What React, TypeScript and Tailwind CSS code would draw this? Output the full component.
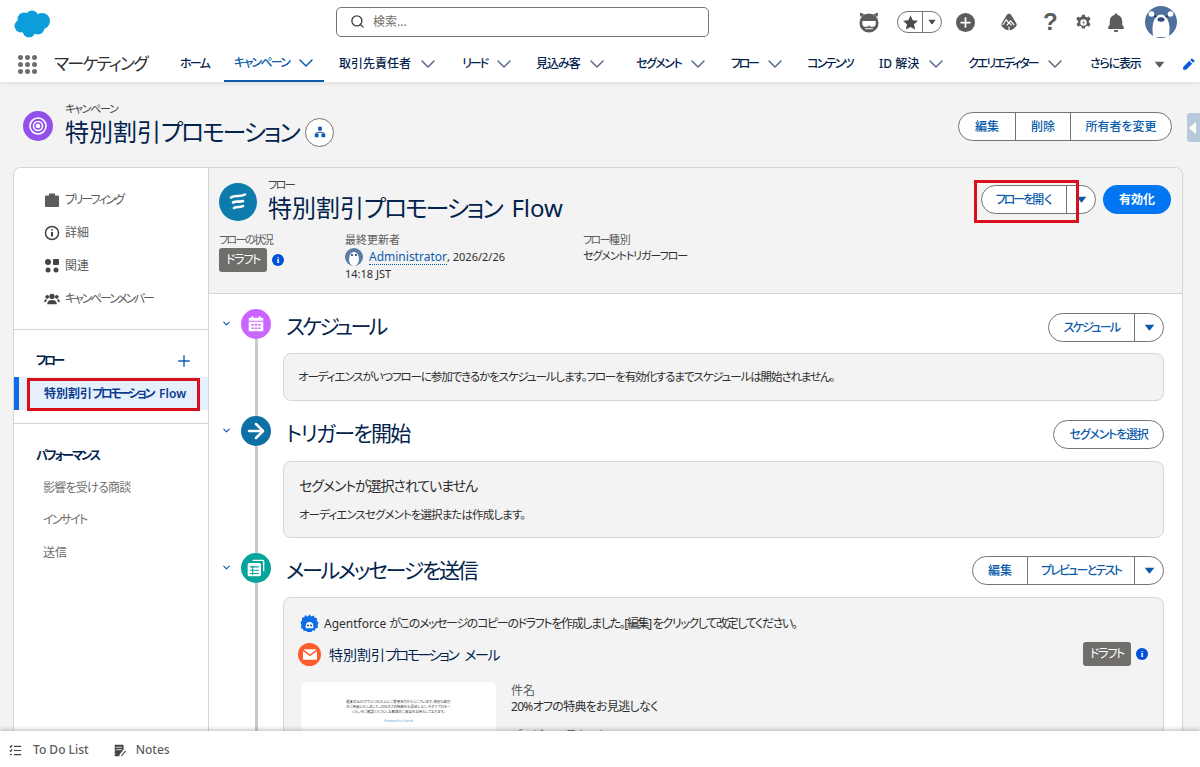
import React from 'react'
import { Search, ChevronDown, Plus, ArrowRight } from 'lucide-react'

const Caret = ({ className = '' }: { className?: string }) => (
  <svg viewBox="0 0 12 8" className={className} fill="currentColor">
    <path d="M0.5 0.8h11L6.6 7.2a.8.8 0 0 1-1.2 0z" />
  </svg>
)

const tabs = [
  { label: 'ホーム', w: 'w-[54px]', track: 'tracking-[-1.7px]' },
  { label: 'キャンペーン', w: 'w-[100px]', track: 'tracking-[-1.8px]', chevron: true, active: true },
  { label: '取引先責任者', w: 'w-[123px]', track: '', chevron: true },
  { label: 'リード', w: 'w-[74px]', track: 'tracking-[-2px]', chevron: true },
  { label: '見込み客', w: 'w-[100px]', track: 'tracking-[-1px]', chevron: true },
  { label: 'セグメント', w: 'w-[95px]', track: 'tracking-[-1.5px]', chevron: true },
  { label: 'フロー', w: 'w-[76px]', track: 'tracking-[-2.3px]', chevron: true },
  { label: 'コンテンツ', w: 'w-[72px]', track: 'tracking-[-1.8px]' },
  { label: 'ID 解決', w: 'w-[89px]', track: '', chevron: true },
  { label: 'クエリエディター', w: 'w-[122px]', track: 'tracking-[-2px]', chevron: true },
]

const Cloud = () => (
  <svg viewBox="0 0 38 28" className="w-[38px] h-[28px]" fill="#0d9dda">
    <circle cx="11" cy="9" r="6.500" />
    <circle cx="19" cy="7" r="6.500" />
    <circle cx="29" cy="11" r="8" />
    <circle cx="8" cy="16" r="6.500" />
    <circle cx="16" cy="21" r="6.500" />
    <circle cx="25" cy="18" r="6.500" />
    <rect x="10" y="8" width="18" height="12" />
  </svg>
)

const Launcher = () => (
  <div className="grid grid-cols-3 gap-x-[2px] gap-y-[2px] w-[19px]">
    {Array.from({ length: 9 }).map((_, i) => (
      <span key={i} className="w-[5px] h-[5px] rounded-full bg-[#706e6b]" />
    ))}
  </div>
)

const Header = () => (
  <header className="h-[82px] bg-white shadow-[0_2px_4px_rgba(0,0,0,0.07)] relative z-10 shrink-0">
    <div className="h-[46px] flex items-center relative">
      <div className="w-[336px] pl-[13px] mt-[1px]"><Cloud /></div>
      <div className="w-[373px] h-[30px] -mt-[3px] border border-[#747474] rounded-[5px] flex items-center pl-[13px] gap-[8px]">
        <Search className="w-[15px] h-[15px] text-[#444]" strokeWidth={2.2} />
        <span className="text-[12px] text-[#706e6b]">検索...</span>
      </div>
      <div className="ml-auto -mt-[2px] flex items-center pr-[23px] text-[#5c5c5c]">
        <svg viewBox="1 1 22 23" className="w-[22px] h-[22px] mr-[17px]" fill="currentColor">
          <circle cx="12" cy="13.500" r="10" />
          <path d="M3 7L2.500 2.500 8 5zM21 7l.5-4.500L16 5z" />
          <path d="M5 11.500h14v2.500a3.500 3.500 0 0 1-3.500 3.500h-1.500a2 2 0 0 1-2-2 2 2 0 0 1-2 2H8.500A3.500 3.500 0 0 1 5 14z" fill="#fff" />
          <path d="M8 19h8v1H8z" fill="#fff" />
        </svg>
        <div className="w-[45px] h-[22px] rounded-full border border-[#747474] flex items-center mr-[14px]">
          <svg viewBox="0 0 24 24" className="w-[17px] h-[17px] ml-[4px] mr-[3px] shrink-0" fill="#4a4a4a">
            <path d="M12 1.800l3.100 6.900 7.400.8-5.500 5 1.500 7.400L12 18.200l-6.500 3.700L7 14.500l-5.500-5 7.400-.8z" />
          </svg>
          <div className="flex-1 h-full border-l border-[#747474] flex items-center justify-center">
            <Caret className="w-[8px] h-[6px] text-[#4a4a4a]" />
          </div>
        </div>
        <div className="w-[19px] h-[19px] rounded-full bg-[#5c5c5c] flex items-center justify-center mr-[25px]">
          <Plus className="w-[15px] h-[15px] text-white" strokeWidth={2.800} />
        </div>
        <svg viewBox="0 0 24 24" className="w-[18px] h-[18px] mr-[25px]" fill="currentColor">
          <path d="M12 1c1.500 0 2.500.8 3.200 1.900l6.300 10.300c1.200 2.200 1 4.300-1 5.300-2 2-4.500 4.500-8.500 4.500S5.500 20.500 3.500 18.500c-2-1-2.200-3.100-1-5.300L8.800 2.900C9.500 1.800 10.500 1 12 1z" />
          <path d="M3.500 16l5-7 3 4.500 2.500-3 5 5.500M9 16.500l3-3.500 3.500 3.500M12 18v5" stroke="#fff" strokeWidth="1.500" fill="none" />
        </svg>
        <span className="text-[24px] leading-none font-bold w-[13px] mr-[19px] text-center font-['Liberation_Sans',sans-serif]">?</span>
        <svg viewBox="0 0 24 24" className="w-[17px] h-[17px] mr-[16px]" fill="currentColor">
          <path fillRule="evenodd" d="M10 1h4l.7 3 2.300 1 2.700-1.600 2.300 3.900-2.300 2.200v2.500l2.300 2.200-2.300 3.900-2.700-1.600-2.300 1-.7 3h-4l-.7-3-2.300-1-2.700 1.600-2.300-3.900 2.300-2.200V9.500L1.700 7.300 4 3.400 6.700 5 9 4zM12 7.500a4.500 4.500 0 1 0 0 9 4.500 4.500 0 0 0 0-9z" />
          <path d="M13 8.500l-3 4h2l-1 3 3-4h-2z" />
        </svg>
        <svg viewBox="3 1 18 21" className="w-[16px] h-[19px] mr-[21px]" fill="currentColor">
          <path d="M12 1.500c1 0 1.600.7 1.700 1.500 3.500.8 5.300 3.500 5.300 7v3.500c0 1.500 2 2.500 2 4.200 0 .6-.4 1-1 1H4c-.6 0-1-.4-1-1 0-1.700 2-2.700 2-4.200V10c0-3.500 1.800-6.200 5.300-7 .1-.8.700-1.500 1.700-1.500zM9.500 20h5a2.500 2.500 0 0 1-5 0z" />
        </svg>
        <svg viewBox="0 0 32 32" className="w-[32px] h-[32px]">
          <circle cx="16" cy="16" r="16" fill="#4f6f9c" />
          <circle cx="6.500" cy="8" r="2.800" fill="#fff" />
          <circle cx="25.500" cy="8" r="2.800" fill="#fff" />
          <path d="M8.500 31C6 22 8 9 16 8.500 24 9 26 22 23.500 31z" fill="#fff" />
          <ellipse cx="16" cy="13.500" rx="3.500" ry="2.200" fill="#2f4a73" />
          <circle cx="10.500" cy="10.500" r="1.100" fill="#1e2f4f" />
          <circle cx="21.500" cy="10.500" r="1.100" fill="#1e2f4f" />
        </svg>
      </div>
    </div>
    <div className="h-[36px] flex items-center">
      <div className="pl-[18px] w-[54px]"><Launcher /></div>
      <span className="w-[126px] text-[17px] text-[#2e2e2e] [font-feature-settings:'palt'] tracking-[-1.800px] whitespace-nowrap">マーケティング</span>
      {tabs.map(t => (
        <div key={t.label} className={`${t.w} h-full shrink-0 flex items-center whitespace-nowrap text-[12px] ${t.active ? 'text-[#0b5cab] border-b-2 border-[#0b5cab] -ml-[10px] mr-[15px] pl-[10px]' : 'text-[#03234d]'}`}>
          <span className={`[font-feature-settings:'palt'] font-medium ${t.track}`}>{t.label}</span>
          {t.chevron && <ChevronDown className={`w-[24px] h-[24px] ml-[5px] ${t.active ? 'text-[#0b5cab]' : 'text-[#5a6b85]'}`} strokeWidth={1.500} />}
        </div>
      ))}
      <div className="w-[92px] flex items-center whitespace-nowrap text-[12px] text-[#03234d]">
        <span className="font-medium [font-feature-settings:'palt'] tracking-[-1.200px]">さらに表示</span>
        <Caret className="w-[11px] h-[7px] ml-[13px] text-[#5c5c5c]" />
      </div>
      <svg viewBox="0 0 24 24" className="w-[14px] h-[14px] text-[#0b5cdb]" fill="currentColor">
        <path d="M17 2l5 5-3 3-5-5zM12.500 6.500l5 5L7 22H2v-5z" />
      </svg>
    </div>
  </header>
)

type Seg = { label?: React.ReactNode; w: string; caret?: boolean; track?: string }

const BtnGroup = ({ segs }: { segs: Seg[] }) => (
  <div className="flex h-[29px] bg-white rounded-full border border-[#747474] overflow-hidden shrink-0">
    {segs.map((s, i) => (
      <div key={i} className={`${s.w} flex items-center justify-center text-[12px] font-medium text-[#0b5cab] [font-feature-settings:'palt'] whitespace-nowrap ${s.track ?? ''} ${i > 0 ? 'border-l border-[#747474]' : ''}`}>
        {s.caret ? <Caret className="w-[11px] h-[7px] text-[#0b5cab]" /> : s.label}
      </div>
    ))}
  </div>
)

const InfoDot = () => (
  <span className="w-[12px] h-[12px] rounded-full bg-[#0250d9] text-white flex items-center justify-center text-[9px] font-bold font-['Liberation_Serif',serif] leading-none shrink-0">i</span>
)

const Draft = () => (
  <span className="w-[48px] h-[24px] rounded-[3px] bg-[#706e6b] text-white text-[12px] tracking-[-1.200px] flex items-center justify-center [font-feature-settings:'palt'] shrink-0">ドラフト</span>
)

const navClass = "flex items-center h-[33px] text-[12px] text-[#5c5c5c] [font-feature-settings:'palt']"

const Sidebar = () => (
  <aside className="w-[195px] shrink-0 bg-white border-r border-[#d5d5d5] relative">
    <div className="pt-[16px] border-b border-[#d5d5d5] pl-[30px] h-[162px]">
      <div className={`${navClass} !h-[32px]`}>
        <svg viewBox="0 0 16 16" className="w-[16px] h-[16px] mr-[5px]" fill="#5c5c5c"><path d="M5 1.500h6v2h3a1 1 0 0 1 1 1V14a1 1 0 0 1-1 1H2a1 1 0 0 1-1-1V4.500a1 1 0 0 1 1-1h3zM6.500 3h3v.500h-3z" /></svg>
        <span className="tracking-[-2px]">ブリーフィング</span>
      </div>
      <div className={navClass}>
        <svg viewBox="0 0 16 16" className="w-[16px] h-[16px] mr-[5px]" fill="none" stroke="#444" strokeWidth="1.500"><circle cx="8" cy="8" r="6.500" /><path d="M8 7v4.500M8 4.200v1.300" strokeWidth="2" /></svg>
        詳細
      </div>
      <div className={navClass}>
        <svg viewBox="0 0 16 16" className="w-[16px] h-[16px] mr-[5px]" fill="#444"><circle cx="4" cy="4" r="3" /><rect x="9" y="1" width="6" height="6" rx="1" /><circle cx="4" cy="12" r="2.500" /><circle cx="12" cy="12" r="2.500" /></svg>
        関連
      </div>
      <div className={navClass}>
        <svg viewBox="0 0 18 16" className="w-[16px] h-[14px] mr-[5px]" fill="#444"><circle cx="9" cy="5" r="3" /><path d="M3.500 14c0-3.500 2-5 5.500-5s5.500 1.500 5.500 5z" /><circle cx="3.500" cy="5.500" r="2.200" /><circle cx="14.500" cy="5.500" r="2.200" /><path d="M0 11.500c0-2.500 1-3.500 3-3.500l-.8 3.500zM18 11.500c0-2.500-1-3.500-3-3.500l.8 3.500z" /></svg>
        <span className="tracking-[-2.200px]">キャンペーンメンバー</span>
      </div>
    </div>
    <div className="border-b border-[#d5d5d5] h-[94px]">
      <div className="flex items-center justify-between pl-[22px] pr-[15px] h-[47px] pt-[14px]">
        <span className="text-[12px] font-bold text-[#03234d] tracking-[-2.600px] [font-feature-settings:'palt']">フロー</span>
        <Plus className="w-[18px] h-[18px] text-[#0b5cab]" strokeWidth={1.800} />
      </div>
      <div className="h-[33px] bg-[#e6f0fc] border-l-[5px] border-[#0b6ee8] flex items-center pl-[25px] text-[12px] font-semibold text-[#0b3c8f] whitespace-nowrap [font-feature-settings:'palt']">
        <span>特別割引</span><span className="tracking-[-2.400px]">プロモーション</span><span className="ml-[6px]">Flow</span>
      </div>
    </div>
    <div className="pl-[22px] pt-[23px]">
      <div className="text-[12px] font-bold text-[#03234d] h-[18px] flex items-center tracking-[-2px] [font-feature-settings:'palt']">パフォーマンス</div>
      <div className="pl-[7px] pt-[6px] text-[12px] text-[#706e6b] [font-feature-settings:'palt']">
        <div className="h-[33px] flex items-center tracking-[-0.750px]">影響を受ける商談</div>
        <div className="h-[32px] flex items-center tracking-[-1.800px]">インサイト</div>
        <div className="h-[33px] flex items-center">送信</div>
      </div>
    </div>
    {/* 注釈の赤枠 */}
    <div className="absolute left-[13px] top-[210px] w-[173px] h-[33px] border-[3px] border-[#d9101c]" />
  </aside>
)

type StepProps = { color: string; icon: React.ReactNode; title: string; track: string; height: string; right: React.ReactNode; children: React.ReactNode }

const Step = ({ color, icon, title, track, height, right, children }: StepProps) => (
  <section className={`flex ${height} pl-[12px] pr-[18px]`}>
    <div className="w-[20px] shrink-0 pt-[9px]"><ChevronDown className="w-[11px] h-[11px] text-[#0b5cab]" strokeWidth={2.500} /></div>
    <div className="w-[30px] shrink-0 flex flex-col items-center">
      <div className={`w-[30px] h-[30px] rounded-full ${color} flex items-center justify-center shrink-0`}>{icon}</div>
      <div className="w-[3px] flex-1 bg-[#c9c9c9]" />
    </div>
    <div className="flex-1 ml-[12px] min-w-0">
      <div className="flex justify-between items-start h-[44px]">
        <h2 className={`text-[21px] leading-[35px] text-[#03234d] ml-[3px] [font-feature-settings:'palt'] whitespace-nowrap ${track}`}>{title}</h2>
        <div className="mt-[4px]">{right}</div>
      </div>
      {children}
    </div>
  </section>
)

const boxClass = 'bg-[#f3f3f3] border border-[#d5d5d5] rounded-[8px]'

const FlowPanel = () => (
  <div className="flex-1 min-w-0 bg-white relative">
    <div className="h-[126px] bg-[#f3f3f3] border-b border-[#d5d5d5] pl-[10px] pt-[10px] relative">
      <div className="flex">
        <div className="w-[38px] h-[38px] mt-[5px] rounded-full bg-[#0d7bab] flex items-center justify-center shrink-0">
          <svg viewBox="0 0 24 24" className="w-[24px] h-[24px]" fill="none" stroke="#fff" strokeWidth="2.600" strokeLinecap="round">
            <path d="M5 7.500c4-3 9 0 14-3" />
            <path d="M7 12.500c3.500-2 7 0 10-1.500" />
            <path d="M8 18c3-2 6 0 9-2" />
          </svg>
        </div>
        <div className="ml-[11px]">
          <div className="text-[11px] leading-[14px] text-[#444] tracking-[-1.500px] [font-feature-settings:'palt']">フロー</div>
          <div className="text-[24px] leading-[32px] text-[#03234d] whitespace-nowrap [font-feature-settings:'palt']">
            <span>特別割引</span><span className="tracking-[-2.200px]">プロモーション</span><span className="ml-[10px]">Flow</span>
          </div>
        </div>
      </div>
      <div className="flex mt-[8px] text-[11px] leading-[16px] text-[#2e2e2e]">
        <div className="w-[126px]">
          <div className="text-[#5c5c5c] tracking-[-1.700px] [font-feature-settings:'palt']">フローの状況</div>
          <div className="flex items-center gap-[5px]"><Draft /><InfoDot /></div>
        </div>
        <div className="w-[238px]">
          <div className="text-[#5c5c5c]">最終更新者</div>
          <div className="flex items-center whitespace-nowrap h-[18px]">
            <svg viewBox="0 0 18 18" className="w-[18px] h-[18px] mr-[6px]">
              <circle cx="9" cy="9" r="9" fill="#5a7ba6" />
              <ellipse cx="9" cy="11" rx="5" ry="7" fill="#fff" />
              <circle cx="7" cy="7" r="1" fill="#1e2f4f" />
              <circle cx="11" cy="7" r="1" fill="#1e2f4f" />
            </svg>
            <span className="text-[#0b5cab] text-[12px] border-b border-dotted border-[#0b5cab] leading-[14px]">Administrator</span>
            <span>, 2026/2/26</span>
          </div>
          <div>14:18 JST</div>
        </div>
        <div>
          <div className="text-[#5c5c5c] [font-feature-settings:'palt']"><span className="tracking-[-1.700px]">フロー</span><span>種別</span></div>
          <div className="tracking-[-1.100px] [font-feature-settings:'palt']">セグメントトリガーフロー</div>
        </div>
      </div>
      <div className="absolute right-[11px] top-[17px] flex items-center gap-[7px]">
        <BtnGroup segs={[{ label: <><span className="tracking-[-2px]">フローを</span><span>開く</span></>, w: 'w-[84px]' }, { w: 'w-[29px]', caret: true }]} />
        <div className="w-[68px] h-[29px] rounded-full bg-[#0176f3] text-white text-[12px] font-bold flex items-center justify-center">有効化</div>
      </div>
      {/* 注釈の赤枠 */}
      <div className="absolute left-[765px] top-[12px] w-[105px] h-[43px] border-[3px] border-[#d9101c]" />
    </div>
    <div className="pt-[15px]">
      <Step
        color="bg-[#cb65ff]"
        height="h-[107px]"
        title="スケジュール"
        track="tracking-[-2.700px]"
        icon={
          <svg viewBox="0 0 16 16" className="w-[18px] h-[18px]" fill="#fff">
            <path fillRule="evenodd" d="M4 1h1.500v1.500h5V1H12v1.500h1.500A1 1 0 0 1 14.500 3.500V5h-13V3.500a1 1 0 0 1 1-1H4zM1.500 6h13v7.500a1 1 0 0 1-1 1h-11a1 1 0 0 1-1-1zM4 8v1.500h2V8zm3 0v1.500h2V8zm3 0v1.500h2V8zM4 11v1.500h2V11zm3 0v1.500h2V11zm3 0v1.500h2V11z" />
          </svg>
        }
        right={<BtnGroup segs={[{ label: 'スケジュール', w: 'w-[85px]', track: 'tracking-[-1.700px]' }, { w: 'w-[29px]', caret: true }]} />}
      >
        <div className={`${boxClass} h-[48px] flex items-center px-[14px] text-[11.500px] tracking-[-1.100px] text-[#2e2e2e] [font-feature-settings:'palt'] whitespace-nowrap`}>
          オーディエンスがいつフローに参加できるかをスケジュールします。フローを有効化するまでスケジュールは開始されません。
        </div>
      </Step>
      <Step
        color="bg-[#0d6fa5]"
        height="h-[137px]"
        title="トリガーを開始"
        track="tracking-[-1.700px]"
        icon={<ArrowRight className="w-[24px] h-[24px] text-white" strokeWidth={2.500} />}
        right={<BtnGroup segs={[{ label: 'セグメントを選択', w: 'w-[109px]', track: 'tracking-[-1.200px]' }]} />}
      >
        <div className={`${boxClass} h-[77px] mt-[1px] px-[15px] pt-[14px] text-[#2e2e2e] [font-feature-settings:'palt']`}>
          <div className="text-[14px] leading-[20px] tracking-[-1.100px]">セグメントが選択されていません</div>
          <div className="text-[11.500px] leading-[16px] mt-[11px] tracking-[-0.900px]">オーディエンスセグメントを選択または作成します。</div>
        </div>
      </Step>
      <Step
        color="bg-[#06a59a]"
        height="h-[200px]"
        title="メールメッセージを送信"
        track="tracking-[-2.300px]"
        icon={
          <svg viewBox="0 0 18 18" className="w-[20px] h-[20px]" fill="#fff">
            <path d="M6 1.500h9a1.500 1.500 0 0 1 1.500 1.500v9h-1.200V3a.3.3 0 0 0-.3-.3H6z" />
            <rect x="1.500" y="4.500" width="12" height="12" rx="1.500" />
            <path d="M3.500 8h8M3.500 11h8M3.500 14h8M6 7v8" stroke="#06a59a" strokeWidth="1" />
          </svg>
        }
        right={
          <div className="-mt-[1px]">
            <BtnGroup segs={[{ label: '編集', w: 'w-[54px]' }, { label: 'プレビューとテスト', w: 'w-[107px]', track: 'tracking-[-1.800px]' }, { w: 'w-[29px]', caret: true }]} />
          </div>
        }
      >
        <div className={`${boxClass} h-[200px] px-[14px] pt-[16px] text-[#2e2e2e] [font-feature-settings:'palt']`}>
          <div className="flex items-center text-[12px] h-[19px] whitespace-nowrap">
            <svg viewBox="0 0 20 20" className="w-[19px] h-[19px] mr-[5px] ml-[2px] shrink-0">
              <path d="M10 .500l2 2 2.500-1 1 2.500 2.500.5-.3 2.500L19.500 9l-1 2.500.5 3-2.500.5-1 2.500-2-.5-1.500 2H8l-2-1.500-2 .5-1-2.500L1 15l.5-3.500L.500 9l1.800-2.500L2 4l2.500-.5 1-2.500L8 3z" fill="#0b6ee8" />
              <path d="M6 12.500a4 4 0 0 1 8 0v2.500H6z" fill="#fff" />
              <circle cx="8.300" cy="12" r="1" fill="#0b3c8f" />
              <circle cx="11.700" cy="12" r="1" fill="#0b3c8f" />
            </svg>
            <span>Agentforce</span>
            <span className="tracking-[-1.350px] ml-[3px]">がこのメッセージのコピーのドラフトを作成しました。[編集] をクリックして改定してください。</span>
          </div>
          <div className="flex items-center mt-[9px] relative h-[24px]">
            <div className="w-[23px] h-[23px] rounded-full bg-[#fe5c2b] flex items-center justify-center">
              <svg viewBox="0 0 16 12" className="w-[14px] h-[11px]" fill="#fff">
                <path d="M1.500 0h13a1 1 0 0 1 .8.400L8 6 .7.400A1 1 0 0 1 1.500 0z" />
                <path d="M0 2l8 6 8-6v9a1 1 0 0 1-1 1H1a1 1 0 0 1-1-1z" />
              </svg>
            </div>
            <span className="ml-[8px] text-[14px] text-[#03234d] whitespace-nowrap">
              <span>特別割引</span><span className="tracking-[-2.400px]">プロモーション</span><span className="ml-[7px] tracking-[-1.500px]">メール</span>
            </span>
            <div className="ml-auto flex items-center gap-[5px] pr-[1px]"><Draft /><InfoDot /></div>
          </div>
          <div className="flex mt-[16px]">
            <div className="w-[195px] h-[120px] bg-white rounded-[6px] ml-[3px] px-[45px] pt-[17px] shrink-0">
              <p className="text-[3.500px] leading-[5px] text-center text-[#333]">週末のおかげでいつも以上にご愛用ありがとうございます。特別な割引をご用意いたしました。20%オフの特典をお見逃しなく。今すぐプロモーションをご確認ください。お客様のご来店をお待ちしております。</p>
              <p className="text-[3.500px] leading-[5px] text-center text-[#5aa6e0] mt-[4px]">Forward to friend</p>
            </div>
            <div className="ml-[15px] text-[12px] leading-[15px] pt-[1px]">
              <div className="text-[#5c5c5c]">件名</div>
              <div className="text-[12px] mt-[1px] tracking-[-0.700px]">20%オフの特典をお見逃しなく</div>
              <div className="text-[#5c5c5c] mt-[14px]">プレビューテキスト</div>
            </div>
          </div>
        </div>
      </Step>
    </div>
  </div>
)

export default function App() {
  return (
    <div className="w-[1200px] h-[767px] overflow-hidden flex flex-col bg-[#f3f3f3] font-['Noto_Sans','Noto_Sans_CJK_JP',sans-serif]">
      <Header />
      <div className="flex-1 min-h-0 overflow-hidden flex flex-col">
        <div className="h-[85px] shrink-0 flex pl-[23px] pr-[28px] relative">
          <div className="w-[30px] h-[30px] mt-[29px] rounded-full bg-[#9050e9] flex items-center justify-center">
            <svg viewBox="0 0 20 20" className="w-[20px] h-[20px]" fill="none" stroke="#fff" strokeWidth="1.600">
              <circle cx="10" cy="10" r="8" />
              <circle cx="10" cy="10" r="4.500" />
              <circle cx="10" cy="10" r="1.500" fill="#fff" />
            </svg>
          </div>
          <div className="ml-[12px] pt-[20px]">
            <div className="text-[11px] leading-[14px] text-[#444] tracking-[-1.300px] [font-feature-settings:'palt']">キャンペーン</div>
            <div className="flex items-center">
              <h1 className="text-[24px] leading-[32px] text-[#03234d] whitespace-nowrap [font-feature-settings:'palt']">
                <span>特別割引</span><span className="tracking-[-2.200px]">プロモーション</span>
              </h1>
              <div className="ml-[7px] w-[29px] h-[29px] rounded-full border border-[#747474] bg-white flex items-center justify-center">
                <svg viewBox="0 0 16 16" className="w-[12px] h-[12px]" fill="#0b5cab">
                  <rect x="5.500" y="1" width="5" height="5" />
                  <rect x="1" y="10" width="5" height="5" />
                  <rect x="10" y="10" width="5" height="5" />
                  <path d="M7.500 6h1v2H13v2h-1V9H4v1H3V8h4.500z" />
                </svg>
              </div>
            </div>
          </div>
          <div className="ml-auto mt-[30px]">
            <BtnGroup segs={[{ label: '編集', w: 'w-[56px]' }, { label: '削除', w: 'w-[55px]' }, { label: '所有者を変更', w: 'w-[101px]' }]} />
          </div>
          <div className="absolute right-0 top-[31px] w-[13px] h-[29px] bg-[#b9c9dc] rounded-l-[3px] flex items-center">
            <span className="border-y-[6px] border-y-transparent border-r-[7px] border-r-white ml-[2px]" />
          </div>
        </div>
        <div className="flex w-[1170px] ml-[13px] flex-1 min-h-0 overflow-hidden rounded-t-[8px] border border-[#d5d5d5] border-b-0 bg-white">
          <Sidebar />
          <FlowPanel />
        </div>
      </div>
      <footer className="h-[36px] pt-[2px] shrink-0 bg-white shadow-[0_-2px_4px_rgba(0,0,0,0.2)] relative z-10 flex items-center pl-[9px] text-[12px] text-[#5c5c5c] font-medium">
        <svg viewBox="0 0 16 16" className="w-[13px] h-[13px] mr-[11px]" fill="none" stroke="#444" strokeWidth="1.500">
          <path d="M6 3h9M6 8h9M6 13h9M1 3l1 1 2-2.500M1 8l1 1 2-2.500" />
          <path d="M1 13h2.500" />
        </svg>
        To Do List
        <svg viewBox="0 0 16 16" className="w-[13px] h-[13px] ml-[24px] mr-[10px]" fill="#444">
          <path d="M3 1h9a1 1 0 0 1 1 1v5l-5 6v2H3a1 1 0 0 1-1-1V2a1 1 0 0 1 1-1z" />
          <path d="M4 4h7M4 7h7M1 4h2M1 8h2M1 12h2" stroke="#fff" strokeWidth="1" />
          <path d="M10 14l5-6 1 1-5 6z" />
        </svg>
        Notes
      </footer>
    </div>
  )
}
